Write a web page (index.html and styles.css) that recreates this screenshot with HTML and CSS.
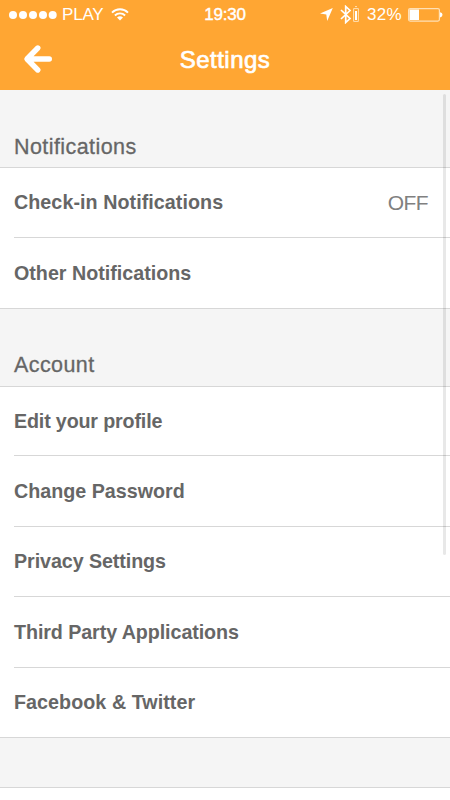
FILE: index.html
```html
<!DOCTYPE html>
<html lang="en">
<head>
<meta charset="utf-8">
<title>Settings</title>
<link rel="stylesheet" href="styles.css">
</head>
<body>
<div class="screen">
  <header class="top">
    <div class="status">
      <div class="status-left">
        <svg class="signal" width="48" height="8" viewBox="0 0 48 8" fill="#fff"><circle cx="4" cy="4" r="4"/><circle cx="14" cy="4" r="4"/><circle cx="24" cy="4" r="4"/><circle cx="34" cy="4" r="4"/><circle cx="43.7" cy="4" r="4"/></svg>
        <span class="carrier">PLAY</span>
        <svg class="wifi" width="18" height="13" viewBox="0 0 18 13" fill="none" stroke="#fff" stroke-width="1.9"><path d="M1 4.6C5.4.1 12.600.1 17 4.600M3.900 7.500C6.700 4.700 11.300 4.700 14.100 7.500"/><path d="M9 12.500L6 9.500Q9 7 12 9.500Z" fill="#fff" stroke="none"/></svg>
      </div>
      <span class="time">19:30</span>
      <div class="status-right">
        <svg class="location" width="13" height="13" viewBox="0 0 13 13" fill="#fff"><path d="M12.800.1L7.200 13L6.300 6.500L0 5.500Z"/></svg>
        <svg class="bluetooth" width="12" height="19" viewBox="0 0 12 19" fill="none" stroke="#fff" stroke-width="1.700"><path d="M1 5L10 13.500L5.700 17.500V1.500L10 5.500L1 14"/></svg>
        <svg class="device-battery" width="6" height="16" viewBox="0 0 6 16"><path d="M.6 2.600H5.400V15.400H.6ZM2 .6H4" fill="none" stroke="#ffe0b5" stroke-width="1"/><path d="M2 5H4V14H2Z" fill="#fff"/></svg>
        <span class="percent">32%</span>
        <svg class="battery" width="35" height="14" viewBox="0 0 35 14"><rect x=".6" y=".6" width="30.800" height="12.500" rx="1.500" fill="none" stroke="#ffe0b5" stroke-width="1.200"/><path d="M1.500 1.500H11V12H1.500Z" fill="#fff"/><path d="M32 4.300Q34.500 4.500 34.500 6.800T32 9.400Z" fill="#fff"/></svg>
      </div>
    </div>
    <div class="nav">
      <svg class="back" width="30" height="30" viewBox="0 0 30 30" fill="none" stroke="#fff" stroke-width="5.400" stroke-linecap="round" stroke-linejoin="round"><path d="M14.800 4L4 15L14.800 26M5 15H26.300"/></svg>
      <h1 class="title">Settings</h1>
    </div>
  </header>
  <main class="content">
    <h2 class="section">Notifications</h2>
    <ul class="list">
      <li class="row"><span class="wide">Check-in Notifications</span><span class="value">OFF</span></li>
      <li class="row"><span>Other Notifications</span></li>
    </ul>
    <h2 class="section second">Account</h2>
    <ul class="list account">
      <li class="row"><span class="tight">Edit your profile</span></li>
      <li class="row"><span>Change Password</span></li>
      <li class="row"><span class="snug">Privacy Settings</span></li>
      <li class="row"><span class="snug">Third Party Applications</span></li>
      <li class="row"><span class="wide">Facebook &amp; Twitter</span></li>
    </ul>
    <div class="gap"></div>
    <div class="scrollbar"></div>
  </main>
</div>
</body>
</html>
```
FILE: styles.css
```css
* { box-sizing: border-box; }
body {
  margin: 0;
  background: #fff;
  font-family: "Liberation Sans", Arial, sans-serif;
  color: #666;
}
.screen {
  width: 450px;
  height: 800px;
  overflow: hidden;
}
.top {
  height: 90px;
  background: #ffa633;
  color: #fff;
}
.status {
  display: grid;
  grid-template-columns: 1fr auto 1fr;
  align-items: center;
  height: 29px;
  padding: 0 7px 0 9px;
}
.status-left, .status-right { display: flex; align-items: center; }
.status-right { justify-content: flex-end; }
.status svg { flex: none; }
.carrier {
  margin-left: 5px;
  font-size: 17px;
  letter-spacing: -0.2px;
}
.wifi { margin-left: 8px; margin-top: -1px; }
.time {
  margin-right: 2px;
  font-size: 17px;
  letter-spacing: -0.2px;
  -webkit-text-stroke: 0.4px #fff;
}
.bluetooth { margin-left: 7px; }
.device-battery { margin-left: 1px; margin-top: -1px; }
.percent {
  margin-left: 8px;
  font-size: 17px;
  letter-spacing: 0.3px;
}
.battery { margin-left: 6px; }
.nav {
  display: grid;
  grid-template-columns: 54px 1fr 54px;
  align-items: center;
  height: 60px;
}
.back { margin-left: 23px; }
.title {
  margin: 0;
  padding-top: 2px;
  text-align: center;
  font-size: 24px;
  font-weight: 400;
  letter-spacing: 0.5px;
  -webkit-text-stroke: 0.7px #fff;
}
.content { position: relative; }
.section {
  height: 78px;
  margin: 0;
  padding: 45px 14px 0;
  border-bottom: 1px solid #d7d7d7;
  background: #f5f5f5;
  font-size: 21.5px;
  line-height: 24px;
  font-weight: 400;
  letter-spacing: 0.42px;
  -webkit-text-stroke: 0.3px #666;
}
.second { padding-top: 44px; }
.list {
  margin: 0;
  padding: 0 0 0 14px;
  list-style: none;
  border-bottom: 1px solid #d7d7d7;
}
.row {
  display: flex;
  align-items: center;
  justify-content: space-between;
  height: 70px;
  padding-right: 22px;
  border-bottom: 1px solid #d7d7d7;
  font-size: 19.7px;
  font-weight: 700;
}
.row:last-child { border-bottom: 0; }
.account .row:nth-child(1) { height: 69px; }
.account .row:nth-child(2), .account .row:nth-child(4) { height: 71px; }
.account .row:nth-child(5) { height: 69px; }
.wide { letter-spacing: 0.06px; }
.snug { letter-spacing: -0.08px; }
.tight { letter-spacing: -0.16px; }
.value {
  font-size: 21px;
  font-weight: 400;
  letter-spacing: -0.6px;
  color: #808080;
}
.gap {
  height: 50px;
  background: #f5f5f5;
  border-bottom: 1px solid #d7d7d7;
}
.scrollbar {
  position: absolute;
  top: 4px;
  right: 4px;
  width: 3px;
  height: 461px;
  border-radius: 2px;
  background: rgba(0, 0, 0, 0.09);
}
```
